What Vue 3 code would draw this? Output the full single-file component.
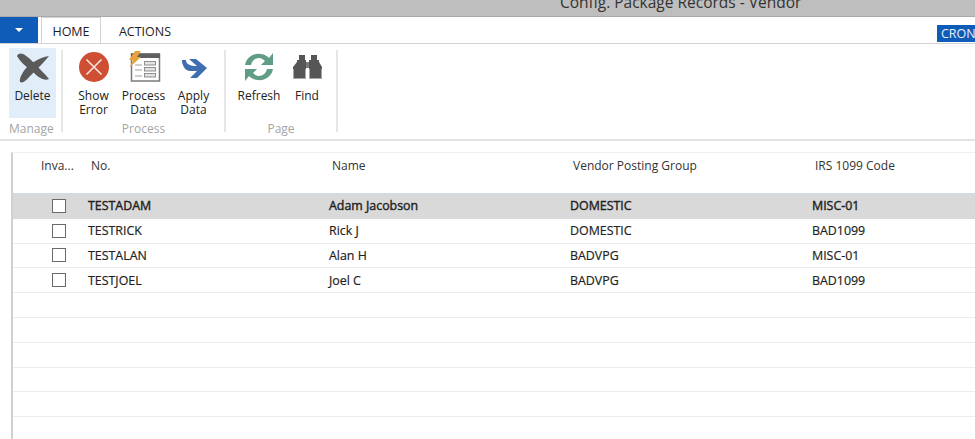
<template>
  <div class="page">
    <div class="title-bar">
      <span class="title-text">Config. Package Records - Vendor</span>
    </div>

    <div class="tab-row">
      <div class="app-btn"><span class="caret"></span></div>
      <div class="tab active">HOME</div>
      <div class="tab">ACTIONS</div>
      <div class="company">CRONUS USA, Inc.</div>
    </div>

    <div class="ribbon">
      <div class="group group-manage">
        <div class="group-items">
          <div class="action selected">
            <svg width="36" height="32" viewBox="0 0 36 32">
              <path d="M2 5 C5 0 10 3 18 11 C24 17 30 23 34 28 C30 30 25 28 19 22 C13 17 6 12 2 5 Z" fill="#5a5a5a" />
              <path d="M34 5 C27 6 19 10 13 15 C8 20 4 27 5 31 C9 33 13 27 19 21 C25 15 30 10 34 5 Z" fill="#5a5a5a" />
            </svg>
            <span class="label">Delete</span>
          </div>
        </div>
        <div class="group-name">Manage</div>
      </div>

      <div class="group group-process">
        <div class="group-items">
          <div class="action">
            <svg width="32" height="32" viewBox="0 0 32 32">
              <circle cx="16" cy="16" r="15" fill="#cf4f35" />
              <path d="M8.5 8.5 L23.5 23.5 M23.5 8.5 L8.5 23.5" stroke="#f6e4df" stroke-width="1.6" />
            </svg>
            <span class="label">Show<br />Error</span>
          </div>
          <div class="action">
            <svg width="34" height="32" viewBox="0 0 34 32">
              <rect x="4.5" y="3" width="28" height="27" fill="#fff" stroke="#7a7a7a" stroke-width="1.5" />
              <rect x="4" y="2.5" width="29" height="4.5" fill="#5f5f5f" />
              <rect x="17.5" y="10.5" width="11" height="3.5" fill="#e2e2e2" stroke="#8f8f8f" />
              <rect x="17.5" y="16.5" width="11" height="3.5" fill="#e2e2e2" stroke="#8f8f8f" />
              <rect x="17.5" y="22.5" width="11" height="3.5" fill="#e2e2e2" stroke="#8f8f8f" />
              <path d="M8 14 H15 M8 19 H15 M8 25 H15" stroke="#a0a0a0" stroke-width="1.2" />
              <path d="M8 0 H14 L10 6 H14 L3 16 L6 9 H2 Z" fill="#e8a43a" />
            </svg>
            <span class="label">Process<br />Data</span>
          </div>
          <div class="action">
            <svg width="30" height="32" viewBox="0 0 30 32">
              <path d="M10 8 H17 L28 17 L18 27 H11 L18 20 H11 C7 20 4 16 3 11 L3 9 H7 C7 13 11 15 18 15 Z" fill="#3c6eb0" />
            </svg>
            <span class="label">Apply<br />Data</span>
          </div>
        </div>
        <div class="group-name">Process</div>
      </div>

      <div class="group group-page">
        <div class="group-items">
          <div class="action">
            <svg width="32" height="32" viewBox="0 0 32 32">
              <path d="M2 14 C3 7 10 2 17 3 C21 3 24 5 26 7 L30 2 V14 H18 L22 10 C20 8 18 7 16 7 C12 7 9 10 8 14 Z" fill="#5f9e85" />
              <path d="M30 18 C29 25 22 30 15 29 C11 29 8 27 6 25 L2 30 V18 H14 L10 22 C12 24 14 25 16 25 C20 25 23 22 24 18 Z" fill="#5f9e85" />
            </svg>
            <span class="label">Refresh</span>
          </div>
          <div class="action">
            <svg width="30" height="32" viewBox="0 0 30 32">
              <path d="M7 4 H13 V9 H14 V15 V28 H1 V16 L5 11 V9 H7 Z" fill="#565656" />
              <path d="M19 4 H25 V9 H27 V11 L30 16 V28 H17 V15 V9 H19 Z" fill="#565656" />
              <rect x="14" y="11" width="3" height="6" fill="#7a7a7a" />
              <path d="M1.5 18 V28 M29.5 18 V28 M13.5 18 V28 M17.5 18 V28" stroke="#a8a8a8" stroke-width="1" />
              <path d="M1 27.5 H14 M17 27.5 H30" stroke="#a8a8a8" stroke-width="1" />
            </svg>
            <span class="label">Find</span>
          </div>
        </div>
        <div class="group-name">Page</div>
      </div>
    </div>

    <div class="content">
      <div class="grid">
        <div class="grid-head">
          <div v-for="col in columns" :key="col" class="head-cell">{{ col }}</div>
        </div>
        <div
          v-for="(row, i) in rows"
          :key="i"
          class="grid-row"
          :class="{ current: i === 0 }"
        >
          <template v-if="row">
            <div class="check-cell"><span class="check"></span></div>
            <div class="cell">{{ row.no }}</div>
            <div class="cell">{{ row.name }}</div>
            <div class="cell">{{ row.group }}</div>
            <div class="cell">{{ row.code }}</div>
          </template>
        </div>
      </div>
    </div>
  </div>
</template>

<script setup>
const columns = ['Inva...', 'No.', 'Name', 'Vendor Posting Group', 'IRS 1099 Code']

const rows = [
  { no: 'TESTADAM', name: 'Adam Jacobson', group: 'DOMESTIC', code: 'MISC-01' },
  { no: 'TESTRICK', name: 'Rick J', group: 'DOMESTIC', code: 'BAD1099' },
  { no: 'TESTALAN', name: 'Alan H', group: 'BADVPG', code: 'MISC-01' },
  { no: 'TESTJOEL', name: 'Joel C', group: 'BADVPG', code: 'BAD1099' },
  null,
  null,
  null,
  null,
  null,
]
</script>

<style>
html, body {
  margin: 0;
  overflow: hidden;
  background: #fff;
}
</style>

<style scoped>
.page {
  width: 975px;
  height: 439px;
  overflow: hidden;
  font-family: "Open Sans", "Noto Sans", sans-serif;
  font-size: 12px;
  color: #222;
  background: #fff;
}

.title-bar {
  height: 16px;
  background: #bebebe;
  border-bottom: 1px solid #a9a9a9;
  overflow: hidden;
  display: flex;
  padding-left: 560px;
}

.title-text {
  font-size: 15.5px;
  line-height: 14px;
  margin-top: -5px;
  color: #333;
  white-space: nowrap;
}

.tab-row {
  height: 26px;
  display: flex;
  align-items: flex-end;
  border-bottom: 1px solid #d2d2d2;
  overflow: hidden;
}

.app-btn {
  width: 38px;
  height: 26px;
  background: #0f5cb8;
  display: flex;
  align-items: center;
  justify-content: center;
  margin-right: 3px;
}

.caret {
  border-left: 4px solid transparent;
  border-right: 4px solid transparent;
  border-top: 4px solid #fff;
}

.tab {
  height: 26px;
  line-height: 29px;
  font-size: 12.5px;
  color: #1d1d1d;
  box-sizing: border-box;
  text-align: center;
  white-space: nowrap;
}

.tab + .tab {
  width: 72px;
  margin-left: 8px;
}

.tab.active {
  width: 60px;
  border: 1px solid #d2d2d2;
  border-bottom: 1px solid #fff;
  line-height: 28px;
  height: 27px;
  margin-bottom: -1px;
}

.company {
  margin-left: auto;
  background: #0f5cb8;
  color: #e6f0fb;
  height: 17px;
  line-height: 17px;
  padding: 0 2px 0 4px;
  margin-bottom: 1px;
  width: 32px;
  flex-shrink: 0;
  overflow: hidden;
  white-space: nowrap;
  font-size: 12.5px;
}

.ribbon {
  height: 95px;
  display: flex;
  border-bottom: 2px solid #e3e3e3;
  padding-left: 9px;
}

.group {
  display: flex;
  flex-direction: column;
  align-items: center;
  margin-top: 6px;
  height: 82px;
  border-right: 2px solid #e6e6e6;
  box-sizing: border-box;
}

.group-manage { width: 54px; align-items: flex-start; }
.group-process { width: 163px; }
.group-page { width: 112px; }

.group-page .group-items {
  align-self: flex-start;
  margin-left: 3px;
}

.group-items {
  display: flex;
  height: 70px;
  margin-top: -2px;
  flex-shrink: 0;
}

.action {
  display: flex;
  flex-direction: column;
  align-items: center;
  width: 50px;
  padding-top: 3px;
  box-sizing: border-box;
}

.group-manage .action { width: 47px; }
.group-page .action:first-child { width: 60px; }
.group-page .action:last-child { width: 36px; }

.action.selected {
  background: #e1eefa;
}

.action svg {
  flex-shrink: 0;
  height: 32px;
  overflow: visible;
}

.label {
  margin-top: 6px;
  text-align: center;
  line-height: 13.5px;
  color: #222;
  white-space: nowrap;
}

.group-name {
  margin-top: 3px;
  color: #a4a4a4;
  line-height: 16px;
}

.content {
  padding: 11px 0 0 11px;
}

.grid {
  height: 287px;
  border-left: 2px solid #d0d0d0;
  border-top: 1px solid #efefef;
  box-sizing: border-box;
}

.grid-head,
.grid-row {
  display: grid;
  grid-template-columns: 75px 241px 241px 242px 1fr;
}

.grid-head {
  height: 40px;
  border-bottom: 1px solid #cfdde9;
}

.head-cell {
  padding: 5px 0 0 3px;
  line-height: 16px;
  color: #333;
}

.head-cell:first-child {
  padding-left: 28px;
}

.grid-row {
  height: 24.8px;
  box-sizing: border-box;
  border-bottom: 1px solid #ececec;
  align-items: center;
}

.grid-row.current {
  background: #d9d9d9;
  border-bottom-color: #d9d9d9;
}

.grid-row.current .cell {
  -webkit-text-stroke: 0.4px #1f1f1f;
}

.check-cell {
  padding-left: 39px;
  display: flex;
}

.check {
  width: 14px;
  height: 14px;
  box-sizing: border-box;
  background: #fff;
  border: 1px solid #6a6a6a;
}

.cell {
  white-space: nowrap;
  color: #1f1f1f;
  font-size: 12.4px;
  -webkit-text-stroke: 0.2px #1f1f1f;
}
</style>
